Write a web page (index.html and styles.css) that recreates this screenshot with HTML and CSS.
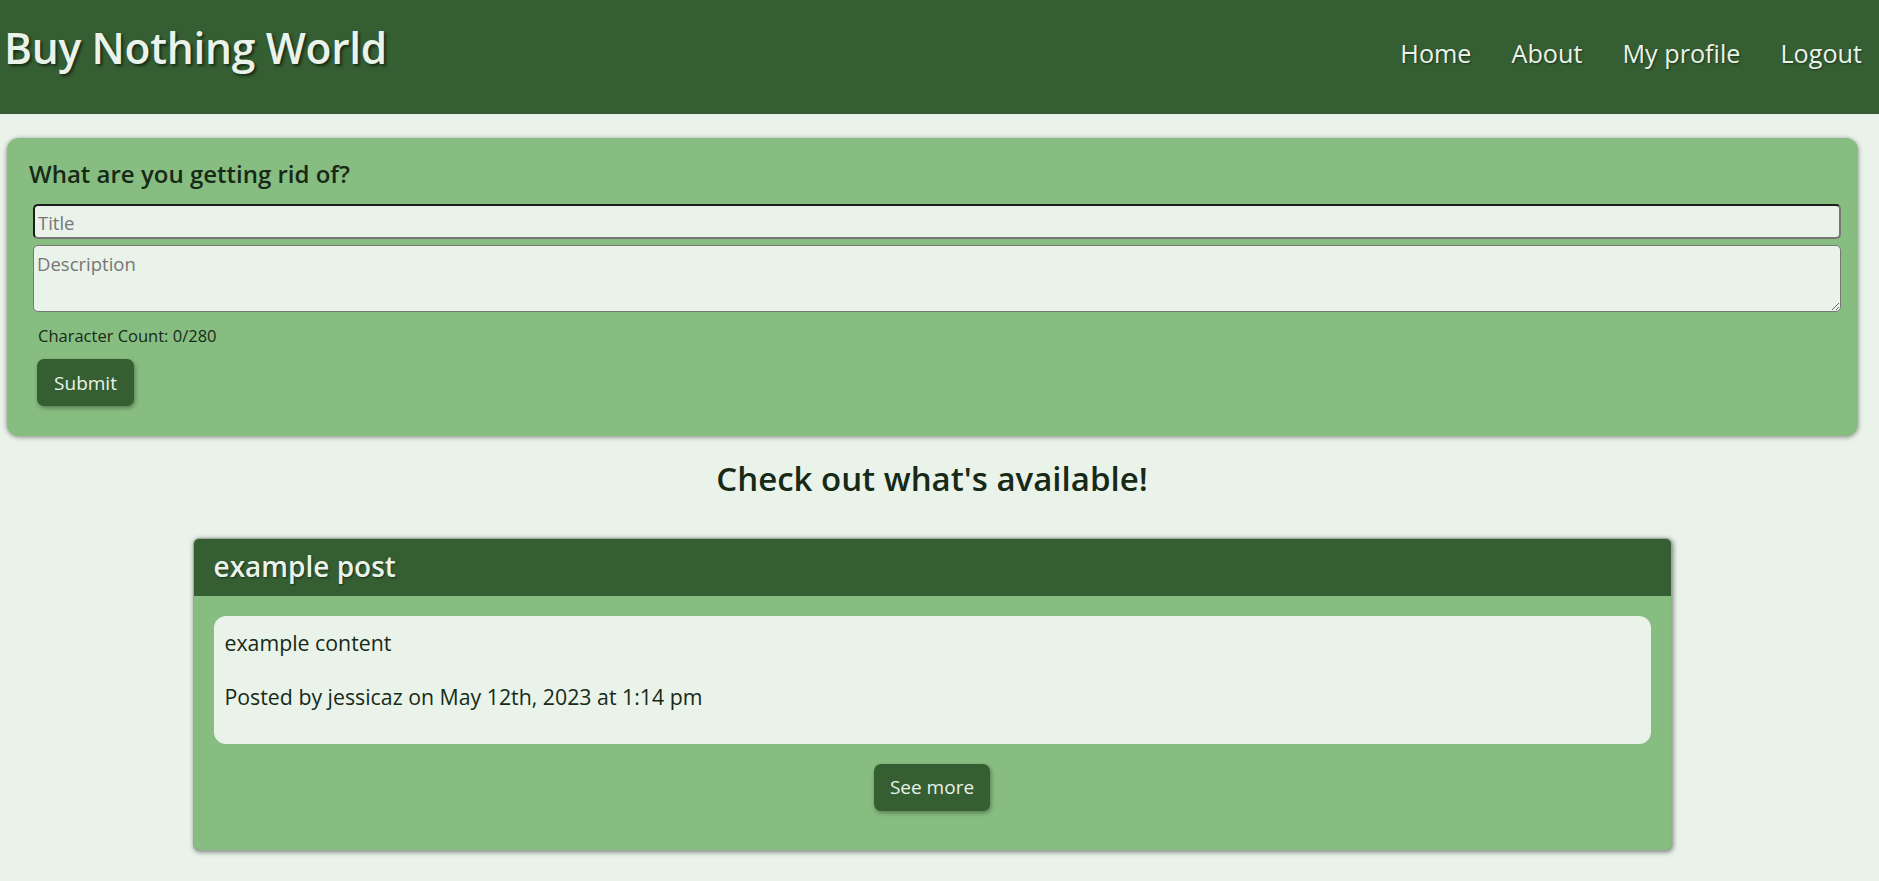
FILE: index.html
```html
<!DOCTYPE html>
<html lang="en">
<head>
<meta charset="utf-8">
<title>Buy Nothing World</title>
<link rel="stylesheet" href="styles.css">
</head>
<body>
<header class="site-header">
  <h1 class="brand">Buy Nothing World</h1>
  <nav class="nav">
    <a href="#" class="nav-link">Home</a>
    <a href="#" class="nav-link">About</a>
    <a href="#" class="nav-link">My profile</a>
    <a href="#" class="nav-link">Logout</a>
  </nav>
</header>
<main class="page">
  <form class="new-post">
    <h2 class="new-post-title">What are you getting rid of?</h2>
    <input class="field field-title" type="text" placeholder="Title">
    <textarea class="field field-desc" placeholder="Description"></textarea>
    <p class="char-count">Character Count: 0/280</p>
    <button type="button" class="btn btn-submit">Submit</button>
  </form>
  <h2 class="section-title">Check out what's available!</h2>
  <article class="post">
    <h3 class="post-head">example post</h3>
    <div class="post-body">
      <div class="post-content">
        <p class="post-text">example content</p>
        <p class="post-meta">Posted by jessicaz on May 12th, 2023 at 1:14 pm</p>
      </div>
      <div class="post-actions">
        <button type="button" class="btn btn-more">See more</button>
      </div>
    </div>
  </article>
</main>
</body>
</html>
```

FILE: styles.css
```css
* { box-sizing: border-box; }

html, body {
  margin: 0;
  padding: 0;
  overflow: hidden;
}

body {
  background: #e9f3ea;
  color: #172a17;
  font-family: "Open Sans", "Noto Sans", sans-serif;
}

.site-header {
  background: #355e32;
  height: 114px;
  display: flex;
  justify-content: space-between;
  align-items: flex-start;
  padding: 0 17px 0 4px;
}

.brand {
  margin: 0;
  padding-top: 27px;
  font-size: 42.5px;
  line-height: 1;
  font-weight: 600;
  color: #e9f3ea;
  text-shadow: 2px 2px 3px rgba(0, 0, 0, 0.55);
  letter-spacing: -0.3px;
}

.nav {
  display: flex;
  gap: 40px;
  padding-top: 41px;
}

.nav-link {
  color: #e9f3ea;
  text-decoration: none;
  font-size: 25.2px;
  line-height: 1;
  text-shadow: 1px 1px 2px rgba(0, 0, 0, 0.45);
}

.page {
  margin-right: 15px;
  padding-bottom: 20px;
}

.new-post {
  margin: 24px 6px 0 7px;
  background: #87bd80;
  border-radius: 12px;
  box-shadow: 0 1px 5px rgba(0, 0, 0, 0.45);
  padding: 24px 17px 30px 26px;
  display: flex;
  flex-direction: column;
  align-items: flex-start;
}

.new-post-title {
  margin: 0 0 18px -4px;
  font-size: 24px;
  line-height: 1;
  font-weight: 600;
}

.field {
  width: 100%;
  background: #e9f3ea;
  font-family: "Open Sans", "Noto Sans", sans-serif;
  font-size: 18.5px;
  color: #172a17;
  border-radius: 5px;
  outline: none;
}

.field::placeholder { color: #767676; }

.field-title {
  height: 35px;
  padding: 1px 3px 0;
  border-style: solid;
  border-width: 2px;
  border-color: #1c1c1c #767676 #767676 #1c1c1c;
}

.field-desc {
  height: 67px;
  margin-top: 6px;
  padding: 5px 3px 2px;
  border: 1px solid #767676;
  resize: vertical;
  line-height: 26px;
}

.char-count {
  margin: 13px 0 0 5px;
  font-size: 16.5px;
  line-height: 22px;
}

.btn {
  background: #355e32;
  color: #e9f3ea;
  border: none;
  border-radius: 7px;
  box-shadow: 1px 2px 4px rgba(0, 0, 0, 0.35);
  font-family: "Open Sans", "Noto Sans", sans-serif;
  cursor: pointer;
}

.btn-submit {
  margin: 12px 0 0 4px;
  width: 97px;
  height: 47px;
  font-size: 19px;
}

.section-title {
  margin: 22px 0 0;
  text-align: center;
  font-size: 33px;
  line-height: 1.3;
  font-weight: 600;
}

.post {
  width: 1479px;
  margin: 37px auto 0;
  background: #87bd80;
  border: 1px solid #9ea59d;
  border-radius: 6px;
  box-shadow: 1px 1px 5px rgba(0, 0, 0, 0.5);
  overflow: hidden;
}

.post-head {
  margin: 0;
  height: 57px;
  background: #355e32;
  color: #e9f3ea;
  font-size: 28px;
  font-weight: 600;
  line-height: 1;
  padding: 13px 0 0 20px;
  text-shadow: 1px 1px 2px rgba(0, 0, 0, 0.5);
}

.post-body {
  padding: 20px 20px 39px;
}

.post-content {
  background: #e9f3ea;
  border-radius: 12px;
  padding: 13px 11px 34px;
}

.post-text, .post-meta {
  margin: 0;
  font-size: 21.3px;
  line-height: 27px;
}

.post-meta { margin-top: 27px; }

.post-actions {
  display: flex;
  justify-content: center;
  padding-top: 20px;
}

.btn-more {
  width: 116px;
  height: 47px;
  font-size: 19px;
}
```
